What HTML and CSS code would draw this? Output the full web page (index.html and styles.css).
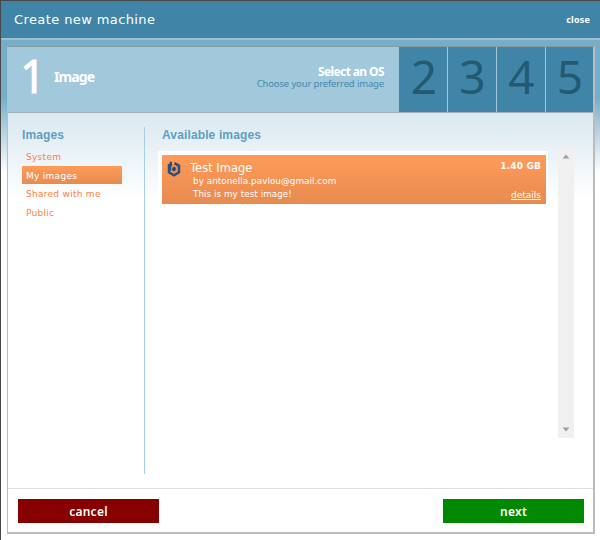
FILE: index.html
```html
<!DOCTYPE html>
<html lang="en">
<head>
<meta charset="utf-8">
<title>Create new machine</title>
<link rel="stylesheet" href="styles.css">
</head>
<body>
<div class="window">
  <header class="titlebar"><h1 class="title">Create new machine</h1><a class="close">close</a></header>
  <main class="panel">
    <div class="steps">
      <div class="current">
        <span class="number">1</span>
        <span class="name">Image</span>
        <div class="hint"><strong class="hint-title">Select an OS</strong><span class="hint-text">Choose your preferred image</span></div>
      </div>
      <div class="step">2</div><div class="step">3</div><div class="step">4</div><div class="step">5</div>
    </div>
    <div class="content">
      <nav class="sidebar">
        <h2 class="heading">Images</h2>
        <ul class="menu">
          <li>System</li>
          <li class="selected">My images</li>
          <li>Shared with me</li>
          <li>Public</li>
        </ul>
      </nav>
      <section class="available">
        <h2 class="heading">Available images</h2>
        <div class="list">
          <div class="items">
            <article class="card">
              <svg class="logo" viewBox="0 0 14 16"><path d="M3.800 0.800v9.200M2 3v8.200L7 14.200l5-3V4.800L7.500 2.200" fill="none" stroke="#2d4f7c" stroke-width="2.500"/><path d="M4 5.500 7 4l3.300 2v4L7 12l-3-2z" fill="#d88a5c"/><circle cx="7" cy="8" r="1.900" fill="#263f66"/></svg>
              <div class="info">
                <h3 class="card-title">Test Image</h3>
                <p class="by">by antonella.pavlou@gmail.com</p>
                <p class="desc">This is my test image!</p>
              </div>
              <div class="meta"><b class="size">1.40 GB</b><a class="details">details</a></div>
            </article>
          </div>
          <div class="scrollbar">
            <svg width="8" height="5" viewBox="0 0 8 5"><path d="M0.500 4.500 4 0.500l3.500 4z" fill="#a0a0a0"/></svg>
            <svg width="8" height="5" viewBox="0 0 8 5"><path d="M0.500 0.500h7L4 4.500z" fill="#a0a0a0"/></svg>
          </div>
        </div>
      </section>
    </div>
    <footer class="actions"><button class="button cancel">cancel</button><button class="button next">next</button></footer>
  </main>
</div>
</body>
</html>
```
FILE: styles.css
```css
* { box-sizing: border-box; margin: 0; padding: 0; }
body { width: 600px; height: 540px; overflow: hidden; font-family: "DejaVu Sans", sans-serif; white-space: nowrap; }
.window {
  height: 540px; display: grid; grid-template-rows: 39px 488px; row-gap: 6px;
  border-top: 1px solid #484848; border-left: 1px solid #484848;
  background: linear-gradient(#76adc9 0, #76adc9 96px, #fff 172px);
}
.titlebar {
  display: flex; align-items: center; justify-content: space-between;
  padding: 0 10px 0 13px; background: #4085a7; border-bottom: 2px solid #a0bfcd; color: #fff;
}
.title { font-size: 13px; font-weight: 400; letter-spacing: .4px; }
.close { font: 700 9px "Noto Sans", sans-serif; letter-spacing: .2px; }
.panel {
  margin: 0 5px 0 6px; border: 1px solid #bbb; border-top-color: #8899a1;
  border-right-width: 2px; border-bottom-width: 2px; background: #fff;
  display: grid; grid-template-rows: 66px 375px 44px;
}
.steps {
  display: grid; grid-template-columns: 391px 48px 49px 49px 48px;
  background: #4085a7; border-bottom: 1px solid #a2b1b8;
  font-family: "Noto Sans", sans-serif;
}
.current { display: flex; align-items: center; padding: 0 15px 5px 12px; background: #a2c8db; color: #fff; }
.number { font-size: 45px; -webkit-text-stroke: .8px #fff; line-height: 54px; width: 34px; margin-top: -2px; }
.name { font-size: 14px; font-weight: 700; letter-spacing: -.9px; margin-top: -2px; }
.hint { margin-left: auto; display: flex; flex-direction: column; align-items: flex-end; }
.hint-title { font-size: 12px; line-height: 13px; letter-spacing: -.6px; }
.hint-text { color: #4589ae; font-size: 9.5px; line-height: 12px; letter-spacing: -.15px; }
.step { color: #235a72; font-size: 46px; line-height: 59px; padding-left: 2px; text-align: center; }
.step + .step { border-left: 1px solid #a2c8db; padding-left: 1px; }
.content { display: grid; grid-template-columns: 136px 1fr; background: linear-gradient(#d9e8f0, #fff 88px); padding: 14px 19px 14px 14px; }
.heading { font: 700 12px/17px "Liberation Sans", sans-serif; color: #5f9fc1; letter-spacing: .13px; }
.sidebar { border-right: 1px solid #a5cfe4; width: 123px; }
.menu { list-style: none; width: 100px; margin-top: 3px; font-size: 9px; letter-spacing: .28px; color: #ff7f43; }
.menu li { height: 18.7px; line-height: 21px; padding-left: 4px; }
.menu .selected { background: linear-gradient(#ff9b59, #e68b4f); color: #fff; }
.available { padding-left: 4px; }
.list { display: grid; grid-template-columns: 388px 16px; justify-content: space-between; margin-top: 4px; height: 290px; }
.items { padding-top: 3px; }
.card {
  display: flex; margin-left: -4px; width: 390px; height: 56px;
  border: solid #fff; border-width: 4px 2px 3px 4px;
  background: linear-gradient(#ff9b59, #e68b4f); color: #fff;
}
.logo { width: 14px; height: 16px; margin: 6px 9px 0 5px; flex: none; }
.info { padding-top: 5px; }
.card-title { font-size: 11.5px; line-height: 17px; margin-bottom: -2px; font-weight: 400; }
.by, .desc { font-size: 8.800px; line-height: 13px; padding-left: 3px; letter-spacing: .05px; }
.meta { margin-left: auto; padding: 6px 5px 4px 0; display: flex; flex-direction: column; justify-content: space-between; align-items: flex-end; font-size: 9px; }
.size { letter-spacing: .15px; }
.details { text-decoration: underline; }
.scrollbar { background: #f0f0f0; display: flex; flex-direction: column; align-items: center; justify-content: space-between; padding: 6px 0; }
.actions { border-top: 1px solid #e0e0e0; display: flex; justify-content: space-between; padding: 10px 9px 9px 10px; }
.button { width: 141px; height: 24px; border: 0; color: #fff; font: 600 12px "Noto Sans", sans-serif; letter-spacing: .25px; }
.cancel { background: #870000; }
.next { background: #008900; }
```
